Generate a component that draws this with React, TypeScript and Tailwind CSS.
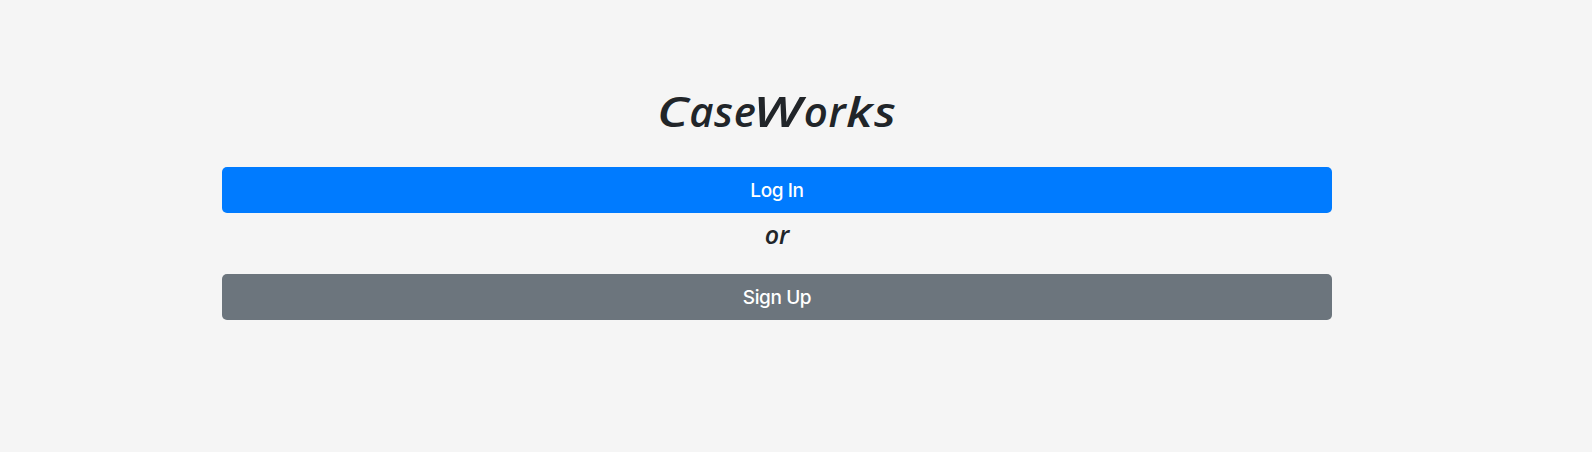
export default function App() {
  return (
    <main className="h-[452px] w-full overflow-hidden bg-[#f5f5f5] pl-[222px] pt-[82px] text-[#212529]">
      <div className="flex w-[1110px] flex-col items-center">
        <h1 className="h-[85px] whitespace-nowrap font-['Open_Sans',sans-serif] text-[42px] font-semibold italic leading-[57px] tracking-[0.6px]">
          <span className="mr-[6px] inline-block origin-left scale-x-[1.25]">C</span>ase<span className="-ml-[3px] mr-[13px] inline-block origin-left scale-x-[1.32]">W</span>or<span className="mr-[5px] inline-block origin-left scale-x-[1.2]">k</span><span className="mr-[3px] inline-block origin-left scale-x-[1.15]">s</span>
        </h1>
        <button className="h-[46px] w-full rounded-[5px] bg-[#007bff] pt-[2px] font-[Inter,sans-serif] text-[19px] font-medium tracking-[-0.4px] text-white">
          Log In
        </button>
        <p className="h-[61px] pt-[4px] font-['Open_Sans',sans-serif] text-[25px] font-semibold italic leading-[34px]">
          or
        </p>
        <button className="h-[46px] w-full rounded-[5px] bg-[#6c757d] pt-[2px] font-[Inter,sans-serif] text-[19px] font-medium tracking-[-0.4px] text-white">
          Sign Up
        </button>
      </div>
    </main>
  );
}
